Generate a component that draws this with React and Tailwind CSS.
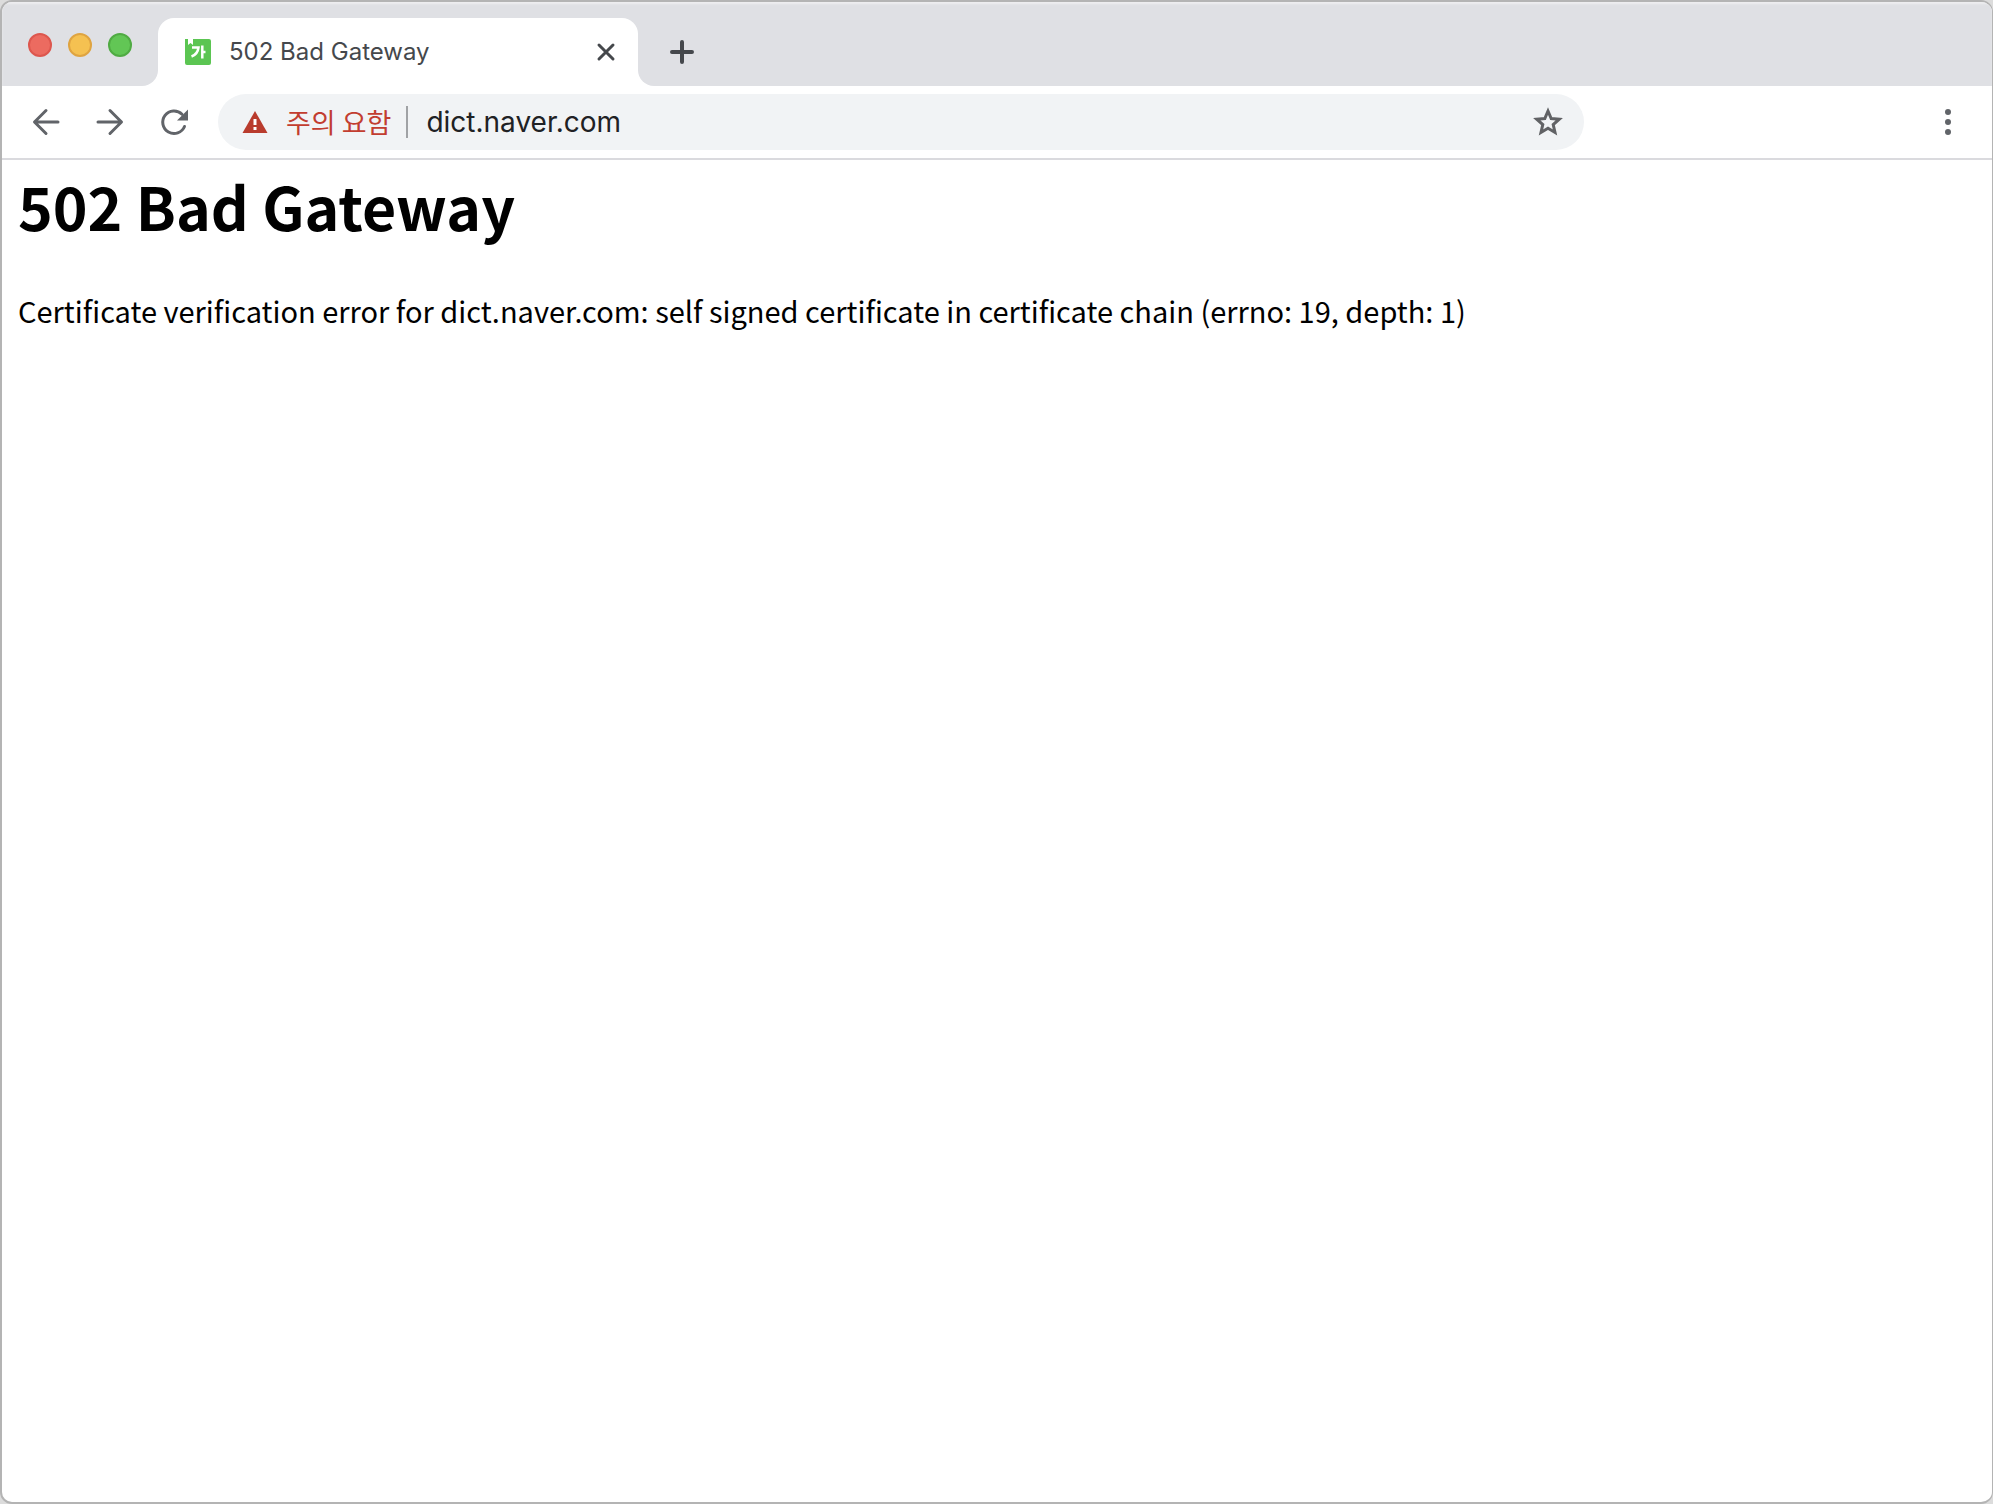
import React from "react";

function Light({ color, label }) {
  return <button aria-label={label} className={`size-6 rounded-full border-2 ${color}`} />;
}

function Favicon() {
  return (
    <svg viewBox="0 0 26 26" className="size-[26px] shrink-0" aria-hidden="true">
      <path d="M0 0H3V6L5.500 4L8 6V0H24a2 2 0 0 1 2 2V24a2 2 0 0 1-2 2H2a2 2 0 0 1-2-2Z" fill="#5bc552" />
      <path d="M7 8.500H13.500C13 13 10.500 16 6.500 17.500" fill="none" stroke="#fff" strokeWidth="2.500" />
      <path d="M17.300 6.500V19.500M17.300 13H20.500" fill="none" stroke="#fff" strokeWidth="2.500" />
    </svg>
  );
}

function TabStrip() {
  return (
    <header className="flex h-[84px] items-end bg-[#dfe0e4] shadow-[inset_0_2px_2px_#eeeef0]">
      <div className="flex w-[140px] items-center gap-4 self-start pt-[31px] pl-[26px]">
        <Light label="닫기" color="border-[#dd574e] bg-[#ec6b60]" />
        <Light label="최소화" color="border-[#dfa441] bg-[#f5c151]" />
        <Light label="최대화" color="border-[#50ab43] bg-[#62c655]" />
      </div>
      <div className="size-4 bg-white">
        <div className="size-4 rounded-br-full bg-[#dfe0e4]" />
      </div>
      <div className="flex h-[68px] w-[480px] items-center rounded-t-2xl bg-white pr-[18px] pl-[27px]">
        <Favicon />
        <h2 className="ml-[18px] flex-1 font-['Inter',sans-serif] text-2xl text-[#45484c]">502 Bad Gateway</h2>
        <button aria-label="탭 닫기" className="flex size-7 items-center justify-center">
          <svg viewBox="0 0 28 28" className="size-7" fill="none" stroke="#45484c" strokeWidth="3" strokeLinecap="round">
            <path d="M7 7L21 21M21 7L7 21" />
          </svg>
        </button>
      </div>
      <div className="size-4 bg-white">
        <div className="size-4 rounded-bl-full bg-[#dfe0e4]" />
      </div>
      <button aria-label="새 탭" className="mb-5 ml-3.5 flex size-7 items-center justify-center">
        <svg viewBox="0 0 28 28" className="size-7" fill="none" stroke="#45484c" strokeWidth="4" strokeLinecap="round">
          <path d="M14 4V24M4 14H24" />
        </svg>
      </button>
    </header>
  );
}

function NavButton({ label, children }) {
  return (
    <button aria-label={label} className="size-8">
      <svg viewBox="0 0 32 32" className="size-8" fill="none" stroke="#616469" strokeWidth="3" strokeLinecap="round" strokeLinejoin="round">
        {children}
      </svg>
    </button>
  );
}

function Toolbar() {
  return (
    <nav className="flex h-[74px] items-center border-b-2 border-[#dadade] bg-white pr-7 pl-7">
      <div className="flex gap-8">
        <NavButton label="뒤로">
          <path d="M28 16H5M16 4.500L4.500 16L16 27.500" />
        </NavButton>
        <NavButton label="앞으로">
          <path d="M4 16H27M16 4.500L27.500 16L16 27.500" />
        </NavButton>
        <NavButton label="새로고침">
          <path d="M26.500 20.500A11.300 11.300 0 1 1 24 8.200" />
          <path d="M30 3.500V14.500H19Z" fill="#616469" stroke="none" />
        </NavButton>
      </div>
      <div className="mr-[348px] ml-7 flex h-14 flex-1 items-center rounded-full bg-[#f1f3f5] pr-5 pl-6">
        <svg viewBox="0 0 26 24" className="h-6 w-[26px] shrink-0" aria-hidden="true">
          <path d="M13 1L25.500 23H0.500Z" fill="#b93b2d" />
          <path d="M11.500 9H14.500V15H11.500ZM11.500 17H14.500V20H11.500Z" fill="#fff" />
        </svg>
        <label htmlFor="address" className="ml-[18px] font-['Noto_Sans_CJK_KR',sans-serif] text-[27px] leading-10 whitespace-nowrap text-[#c23d30]">
          주의 요함
        </label>
        <div className="ml-[15px] h-8 w-0.5 bg-[#a0a2a5]" />
        <input
          id="address"
          type="text"
          defaultValue="dict.naver.com"
          className="ml-[18px] min-w-0 flex-1 bg-transparent font-['Inter',sans-serif] text-[28px] leading-10 text-[#202124] outline-none"
        />
        <button aria-label="북마크" className="size-8">
          <svg viewBox="0 0 32 32" className="size-8" fill="none" stroke="#616265" strokeWidth="3">
            <path d="M16 5L19.200 12.500L27.300 13.200L21.200 18.600L23 26.500L16 22.300L9 26.500L10.800 18.600L4.700 13.200L12.800 12.500Z" />
          </svg>
        </button>
      </div>
      <button aria-label="메뉴" className="size-8">
        <svg viewBox="0 0 32 32" className="size-8" fill="#616469">
          <circle cx="16" cy="6" r="3" />
          <circle cx="16" cy="16" r="3" />
          <circle cx="16" cy="26" r="3" />
        </svg>
      </button>
    </nav>
  );
}

export default function App() {
  return (
    <div className="flex min-h-screen bg-[#dcdcdc]">
      <div className="flex-1 overflow-hidden rounded-xl border-2 border-r border-[#b4b4b4] bg-white">
        <TabStrip />
        <Toolbar />
        <main className="px-4 pt-1.5 font-['Noto_Sans_CJK_KR',sans-serif] text-black">
          <h1 className="text-[59px] leading-[80px] font-bold">502 Bad Gateway</h1>
          <p className="mt-10 text-[29px] leading-12">
            Certificate verification error for dict.naver.com: self signed certificate in certificate chain (errno: 19, depth: 1)
          </p>
        </main>
      </div>
    </div>
  );
}
